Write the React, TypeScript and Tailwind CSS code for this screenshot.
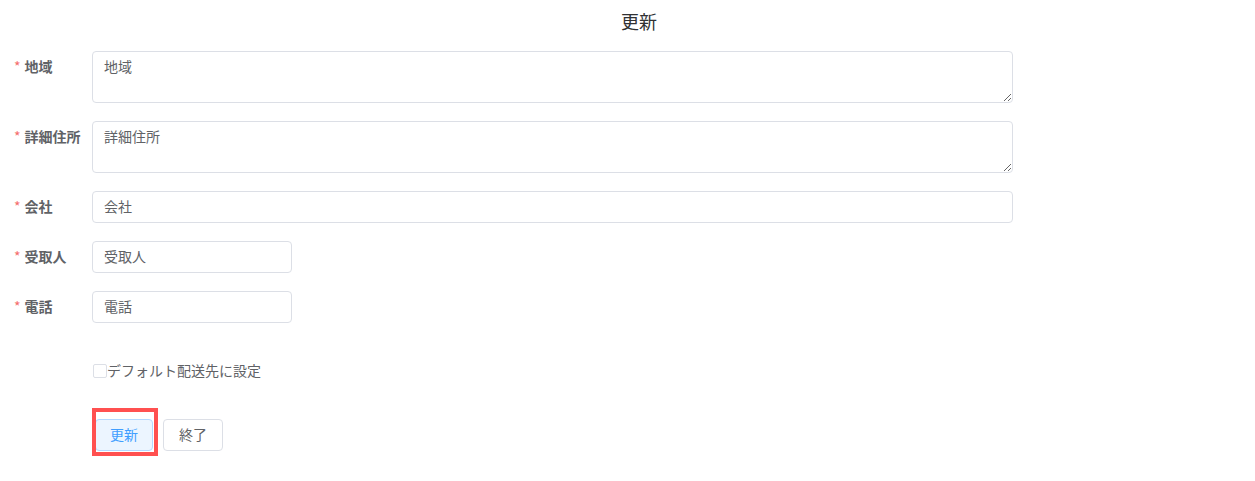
import React from "react";

const font = { fontFamily: '"Noto Sans CJK JP", "Noto Sans", sans-serif' };

function Label({ text }: { text: string }) {
  return (
    <div className="w-[92px] shrink-0 pl-[14px] text-[14px] leading-[30px] font-bold text-[#606266]">
      <span className="mr-[4px] font-normal text-[#f56c6c]">*</span>
      {text}
    </div>
  );
}

function TextAreaRow({ label }: { label: string }) {
  return (
    <div className="mb-[18px] flex items-start">
      <Label text={label} />
      <textarea
        defaultValue={label}
        style={font}
        className="block h-[52px] w-[921px] rounded-[4px] border border-[#dcdfe6] bg-white px-[11px] pt-[4px] pb-[6px] text-[14px] leading-[21px] text-[#606266] outline-none"
      />
    </div>
  );
}

function InputRow({ label, w }: { label: string; w: string }) {
  return (
    <div className="mb-[18px] flex items-start">
      <Label text={label} />
      <input
        defaultValue={label}
        style={font}
        className={`block h-[32px] ${w} rounded-[4px] border border-[#dcdfe6] bg-white px-[11px] pb-[2px] text-[14px] text-[#606266] outline-none`}
      />
    </div>
  );
}

export default function App() {
  return (
    <div className="relative h-[481px] w-[1255px] bg-white" style={font}>
      <div className="h-[51px] pl-[23px] pt-[9px] text-center text-[18px] leading-[24px] text-[#303133]">
        更新
      </div>
      <TextAreaRow label="地域" />
      <TextAreaRow label="詳細住所" />
      <InputRow label="会社" w="w-[921px]" />
      <InputRow label="受取人" w="w-[200px]" />
      <InputRow label="電話" w="w-[200px]" />
      <div className="-mt-[18px] pt-[38px]">
        <div className="ml-[93px] flex h-[20px] items-center text-[14px] leading-[20px] text-[#606266]">
          <span className="block h-[14px] w-[14px] rounded-[2px] border border-[#dcdfe6] bg-white" />
          <span className="pb-[2px]">デフォルト配送先に設定</span>
        </div>
      </div>
      <div className="relative ml-[95px] mt-[38px] flex gap-[10px]">
        <button
          style={font}
          className="h-[32px] rounded-[4px] border border-[#b3d8ff] bg-[#ecf5ff] px-[14px] pb-[2px] text-[14px] text-[#409eff]"
        >
          更新
        </button>
        <button
          style={font}
          className="h-[32px] rounded-[4px] border border-[#dcdfe6] bg-white px-[15px] pb-[2px] text-[14px] text-[#606266]"
        >
          終了
        </button>
        <div className="pointer-events-none absolute left-[-3px] top-[-11px] h-[48px] w-[66px] border-[4px] border-[#ff5050]" />
      </div>
    </div>
  );
}
